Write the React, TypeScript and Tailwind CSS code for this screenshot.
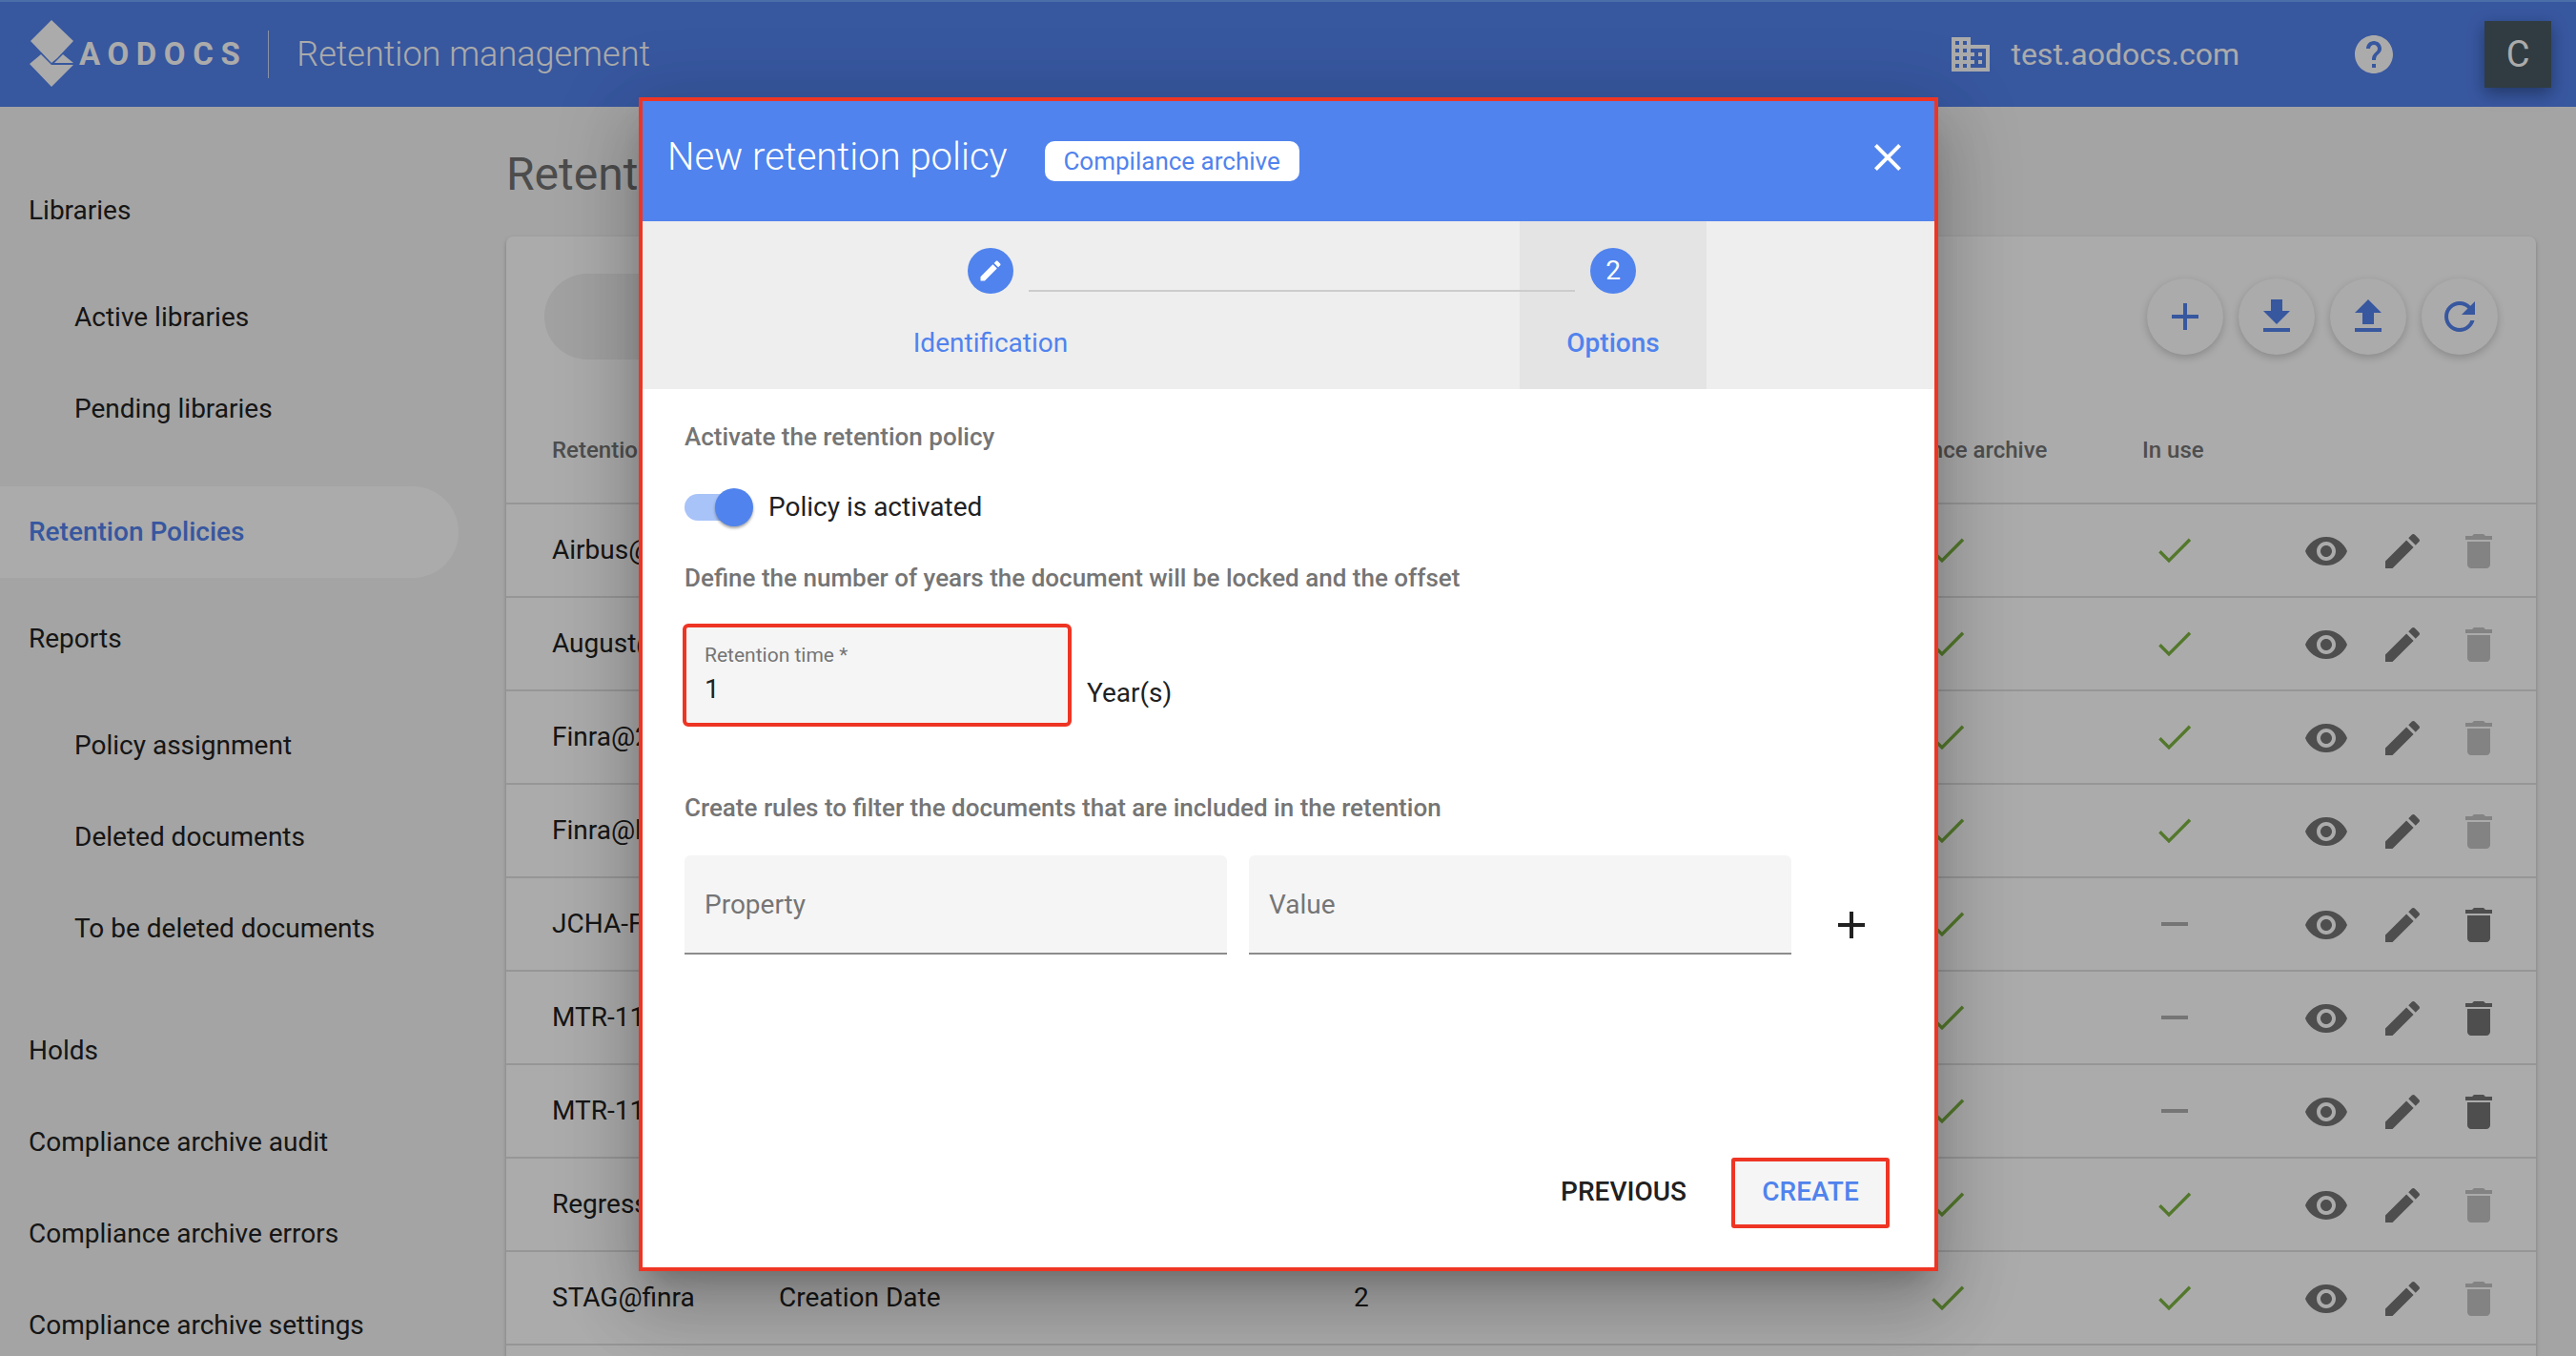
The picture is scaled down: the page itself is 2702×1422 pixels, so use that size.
const ICONS = {
  eye: "M12 4.5C7 4.5 2.73 7.61 1 12c1.73 4.39 6 7.5 11 7.5s9.27-3.11 11-7.5c-1.73-4.39-6-7.5-11-7.5zM12 17c-2.76 0-5-2.24-5-5s2.24-5 5-5 5 2.24 5 5-2.24 5-5 5zm0-8c-1.66 0-3 1.34-3 3s1.34 3 3 3 3-1.34 3-3-1.34-3-3-3z",
  edit: "M3 17.25V21h3.75L17.81 9.94l-3.75-3.75L3 17.25zM20.71 7.04c.39-.39.39-1.02 0-1.41l-2.34-2.34c-.39-.39-1.02-.39-1.41 0l-1.83 1.83 3.75 3.75 1.83-1.83z",
  trash: "M6 19c0 1.1.9 2 2 2h8c1.1 0 2-.9 2-2V7H6v12zM19 4h-3.5l-1-1h-5l-1 1H5v2h14V4z",
  check: "M9 16.2L4.8 12l-1.2 1.2L9 18.6 20.6 7l-1.2-1.2L9 16.2z",
  dash: "M19 13H5v-2h14v2z",
  plus: "M19 13h-6v6h-2v-6H5v-2h6V5h2v6h6v2z",
  close: "M19 6.41L17.59 5 12 10.59 6.41 5 5 6.41 10.59 12 5 17.59 6.41 19 12 13.41 17.59 19 19 17.59 13.41 12z",
  download: "M19 9h-4V3H9v6H5l7 7 7-7zM5 18v2h14v-2H5z",
  upload: "M9 16h6v-6h4l-7-7-7 7h4zm-4 2h14v2H5z",
  refresh: "M17.65 6.35C16.2 4.9 14.21 4 12 4c-4.42 0-7.99 3.58-7.99 8s3.57 8 7.99 8c3.73 0 6.84-2.55 7.73-6h-2.08c-.82 2.33-3.04 4-5.65 4-3.31 0-6-2.69-6-6s2.69-6 6-6c1.66 0 3.14.69 4.22 1.78L13 11h7V4l-2.35 2.35z",
  domain: "M12 7V3H2v18h20V7H12zM6 19H4v-2h2v2zm0-4H4v-2h2v2zm0-4H4V9h2v2zm0-4H4V5h2v2zm4 12H8v-2h2v2zm0-4H8v-2h2v2zm0-4H8V9h2v2zm0-4H8V5h2v2zm10 12h-8v-2h2v-2h-2v-2h2v-2h-2V9h8v10zm-2-8h-2v2h2v-2zm0 4h-2v2h2v-2z",
  help: "M12 2C6.48 2 2 6.48 2 12s4.48 10 10 10 10-4.48 10-10S17.52 2 12 2zm1 17h-2v-2h2v2zm2.07-7.75l-.9.92C13.45 12.9 13 13.5 13 15h-2v-.5c0-1.1.45-2.1 1.17-2.83l1.24-1.26c.37-.36.59-.86.59-1.41 0-1.1-.9-2-2-2s-2 .9-2 2H8c0-2.21 1.79-4 4-4s4 1.79 4 4c0 .88-.36 1.68-.93 2.25z",
};

const Icon = ({ d, className }: { d: string; className: string }) => (
  <svg viewBox="0 0 24 24" fill="currentColor" className={className}>
    <path d={d} />
  </svg>
);

const rows = [
  { name: "Airbus@finra", inUse: true },
  { name: "August@finra", inUse: true },
  { name: "Finra@2years", inUse: true },
  { name: "Finra@legal", inUse: true },
  { name: "JCHA-Finra", inUse: false },
  { name: "MTR-1100", inUse: false },
  { name: "MTR-1101", inUse: false },
  { name: "Regression", inUse: true },
  { name: "STAG@finra", inUse: true },
];

const SideItem = ({ label, sub, className = "" }: { label: string; sub?: boolean; className?: string }) => (
  <div className={`h-[96px] flex items-center text-[28px] text-[#212121] ${sub ? "pl-[78px]" : "pl-[30px]"} ${className}`}>
    {label}
  </div>
);

const Logo = () => (
  <svg viewBox="0 0 50 74" className="w-[50px] h-[74px] text-white" fill="currentColor">
    <polygon points="24,1 47,23 30,41 24,46 2,23" />
    <polygon points="13,37 24,48 47,48 24,71 1,47" />
    <polygon points="27,46 36,37 47,46" />
  </svg>
);

function RoundButton({ d }: { d: string }) {
  return (
    <div className="w-[80px] h-[80px] rounded-full bg-white text-[#5382ee] flex items-center justify-center shadow-[0_3px_8px_rgba(0,0,0,0.2)]">
      <Icon d={d} className="w-[48px] h-[48px]" />
    </div>
  );
}

function Page() {
  return (
    <div className="w-full h-full bg-[#f5f5f5]">
      {/* Header */}
      <header className="h-[112px] bg-[#5382ee] border-t-2 border-[#6fa6fb] flex items-center pr-[26px] pl-[30px] text-white">
        <Logo />
        <span className="ml-[3px] text-[33px] font-bold tracking-[0.23em]">AODOCS</span>
        <div className="ml-[22px] w-[1px] h-[50px] bg-white/70" />
        <span className="ml-[29px] text-[36px] font-light">Retention management</span>
        <Icon d={ICONS.domain} className="ml-auto w-[48px] h-[48px]" />
        <span className="ml-[18px] text-[32px]">test.aodocs.com</span>
        <Icon d={ICONS.help} className="ml-[117px] w-[48px] h-[48px]" />
        <div className="ml-[92px] w-[70px] h-[70px] bg-[#485a63] flex items-center justify-center text-[38px] shadow-[0_6px_16px_rgba(0,0,0,0.35)]">
          C
        </div>
      </header>

      <div className="flex">
        {/* Sidebar */}
        <nav className="w-[531px] shrink-0 pt-[61px]">
          <SideItem label="Libraries" className="mb-4" />
          <SideItem label="Active libraries" sub />
          <SideItem label="Pending libraries" sub />
          <div className="mt-[33px] w-[481px] h-[96px] rounded-r-full bg-white flex items-center pl-[30px] text-[28px] font-medium text-[#5382ee]">
            Retention Policies
          </div>
          <SideItem label="Reports" className="mt-4 mb-4" />
          <SideItem label="Policy assignment" sub />
          <SideItem label="Deleted documents" sub />
          <SideItem label="To be deleted documents" sub />
          <SideItem label="Holds" className="mt-8" />
          <SideItem label="Compliance archive audit" />
          <SideItem label="Compliance archive errors" />
          <SideItem label="Compliance archive settings" />
        </nav>

        {/* Main */}
        <main className="flex-1 pr-[42px] pt-[36px]">
          <h1 className="h-[70px] leading-[70px] text-[48px] text-[#727272]">Retention Policies</h1>
          <section className="mt-[30px] bg-white rounded-[7px] shadow-[0_2px_4px_rgba(0,0,0,0.25)]">
            <div className="h-[168px] flex items-center pl-[40px] pr-[40px]">
              <div className="w-[1000px] h-[90px] rounded-full bg-[#f0f0f0]" />
              <div className="ml-auto flex gap-4">
                <RoundButton d={ICONS.plus} />
                <RoundButton d={ICONS.download} />
                <RoundButton d={ICONS.upload} />
                <RoundButton d={ICONS.refresh} />
              </div>
            </div>
            <div className="h-[113px] pl-[48px] grid grid-cols-[238px_603px_516px_311px_1fr] items-center text-[24px] font-medium text-[#757575] border-b-2 border-[#e0e0e0]">
              <span>Retention policy</span>
              <span>Property</span>
              <span>Years</span>
              <span>Compliance archive</span>
              <span>In use</span>
            </div>
            {rows.map((row) => (
              <div
                key={row.name}
                className="h-[98px] pl-[48px] grid grid-cols-[238px_603px_516px_311px_1fr] items-center text-[28px] text-[#212121] border-b-2 border-[#e0e0e0]"
              >
                <span>{row.name}</span>
                <span>Creation Date</span>
                <span>2</span>
                <Icon d={ICONS.check} className="ml-[83px] w-[48px] h-[48px] text-[#7cb342]" />
                <div className="flex items-center">
                  <Icon
                    d={row.inUse ? ICONS.check : ICONS.dash}
                    className={`ml-[10px] w-[48px] h-[48px] ${row.inUse ? "text-[#7cb342]" : "text-[#afafaf]"}`}
                  />
                  <div className="ml-auto pr-[36px] pt-[2px] flex gap-[32px] text-[#757575]">
                    <Icon d={ICONS.eye} className="w-[48px] h-[48px]" />
                    <Icon d={ICONS.edit} className="w-[48px] h-[48px]" />
                    <Icon d={ICONS.trash} className={`w-[48px] h-[48px] ${row.inUse ? "text-[#c4c4c4]" : ""}`} />
                  </div>
                </div>
              </div>
            ))}
            {/* next row runs off the bottom of the window */}
            <div className="h-[98px]" />
          </section>
        </main>
      </div>
    </div>
  );
}

function Modal() {
  return (
    <div className="absolute left-[670px] top-[102px] w-[1363px] h-[1231px] border-4 border-[#ee3524] bg-white flex flex-col shadow-[0_18px_26px_-12px_rgba(0,0,0,0.2),0_41px_65px_5px_rgba(0,0,0,0.14),0_16px_79px_14px_rgba(0,0,0,0.12)]">
      {/* Title bar */}
      <div className="h-[126px] shrink-0 bg-[#5083ed] flex items-center pl-[26px] pr-[25px] pb-[8px] text-white">
        <h2 className="text-[40px] font-light">New retention policy</h2>
        <span className="ml-[39px] mt-[8px] w-[267px] h-[42px] rounded-[10px] bg-white text-[#5083ed] text-[26px] flex items-center justify-center">
          Compilance archive
        </span>
        <Icon d={ICONS.close} className="ml-auto w-[48px] h-[48px]" />
      </div>

      {/* Stepper */}
      <div className="relative h-[176px] shrink-0 bg-[#eeeeee] flex pl-[267px]">
        <div className="w-[196px] flex flex-col items-center pt-[28px]">
          <div className="w-[48px] h-[48px] rounded-full bg-[#5083ed] text-white flex items-center justify-center">
            <Icon d={ICONS.edit} className="w-[28px] h-[28px]" />
          </div>
          <span className="mt-[31px] text-[28px] text-[#5083ed]">Identification</span>
        </div>
        <div className="ml-[457px] w-[196px] bg-[#e4e4e4] flex flex-col items-center pt-[28px]">
          <div className="w-[48px] h-[48px] rounded-full bg-[#5083ed] text-white flex items-center justify-center text-[28px]">
            2
          </div>
          <span className="mt-[31px] text-[28px] font-medium text-[#5083ed]">Options</span>
        </div>
        <div className="absolute left-[405px] top-[72px] w-[573px] h-[2px] bg-[#cccccc]" />
      </div>

      {/* Form */}
      <div className="flex-1 flex flex-col pl-[44px] pr-[47px] pt-[32px] pb-[41px]">
        <p className="h-[36px] leading-[36px] text-[26px] font-medium text-[#757575]">Activate the retention policy</p>

        <div className="mt-[36px] h-[40px] flex items-center">
          <div className="relative w-[64px] h-[28px] rounded-full bg-[#a8c3f8]">
            <div className="absolute -top-[6px] left-[32px] w-[40px] h-[40px] rounded-full bg-[#5083ed] shadow-[0_2px_3px_rgba(0,0,0,0.35)]" />
          </div>
          <span className="ml-[24px] text-[28px] text-[#212121]">Policy is activated</span>
        </div>

        <p className="mt-[36px] h-[36px] leading-[36px] text-[26px] font-medium text-[#757575]">
          Define the number of years the document will be locked and the offset
        </p>

        <div className="mt-[30px] flex">
          <div className="w-[408px] h-[108px] -ml-[2px] border-4 border-[#ee3524] rounded-[6px] bg-[#f5f5f5] pl-[19px] pt-[15px]">
            <div className="h-[28px] leading-[28px] text-[21px] text-[#757575]">Retention time *</div>
            <div className="h-[36px] leading-[36px] mt-[4px] text-[28px] text-[#212121]">1</div>
          </div>
          <span className="ml-[16px] mt-[55px] h-[36px] leading-[36px] text-[28px] text-[#212121]">Year(s)</span>
        </div>

        <p className="mt-[67px] h-[36px] leading-[36px] text-[26px] font-medium text-[#757575]">
          Create rules to filter the documents that are included in the retention
        </p>

        <div className="mt-[32px] flex items-center gap-[23px]">
          <div className="w-[569px] h-[104px] rounded-t-[6px] bg-[#f5f5f5] border-b-2 border-[#8c8c8c] flex items-center pl-[21px] pt-[2px] text-[28px] text-[#757575]">
            Property
          </div>
          <div className="w-[569px] h-[104px] rounded-t-[6px] bg-[#f5f5f5] border-b-2 border-[#8c8c8c] flex items-center pl-[21px] pt-[2px] text-[28px] text-[#757575]">
            Value
          </div>
          <Icon d={ICONS.plus} className="ml-[16px] mt-[42px] w-[48px] h-[48px] text-[#212121]" />
        </div>

        <div className="mt-auto flex items-center justify-end gap-[47px]">
          <span className="pb-[2px] text-[28px] font-medium text-[#212121]">PREVIOUS</span>
          <div className="w-[166px] h-[74px] pb-[2px] border-4 border-[#ee3524] rounded-[3px] bg-[#f5f5f5] flex items-center justify-center text-[28px] font-medium text-[#5083ed]">
            CREATE
          </div>
        </div>
      </div>
    </div>
  );
}

export default function App() {
  return (
    <div className="relative w-[2702px] h-[1422px] overflow-hidden font-['Roboto',sans-serif]">
      <Page />
      <div className="absolute inset-0 bg-black/33" />
      <Modal />
    </div>
  );
}
